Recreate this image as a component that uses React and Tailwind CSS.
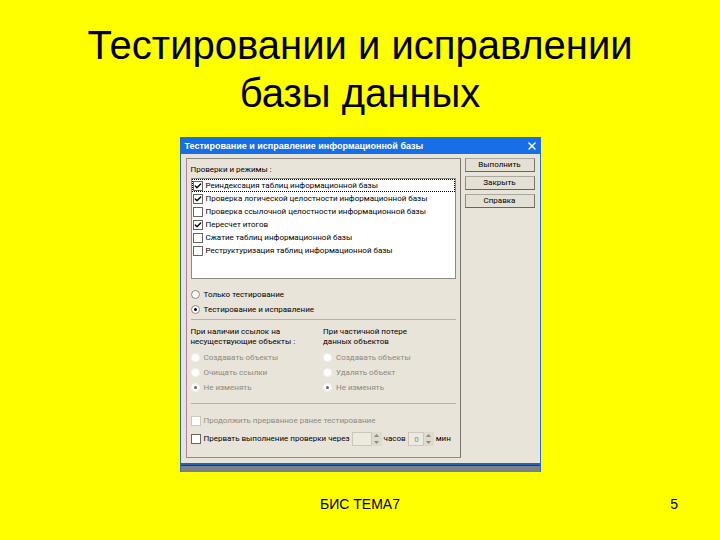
import React from 'react';
import { Check, X } from 'lucide-react';

const checks = [
  { label: 'Реиндексация таблиц информационной базы', checked: true },
  { label: 'Проверка логической целостности информационной базы', checked: true },
  { label: 'Проверка ссылочной целостности информационной базы', checked: false },
  { label: 'Пересчет итогов', checked: true },
  { label: 'Сжатие таблиц информационной базы', checked: false },
  { label: 'Реструктуризация таблиц информационной базы', checked: false },
];

const modes = ['Только тестирование', 'Тестирование и исправление'];

const repairGroups = [
  {
    name: 'missing',
    title: ['При наличии ссылок на', 'несуществующие объекты :'],
    options: ['Создавать объекты', 'Очищать ссылки', 'Не изменять'],
  },
  {
    name: 'partial',
    title: ['При частичной потере', 'данных объектов'],
    options: ['Создавать объекты', 'Удалять объект', 'Не изменять'],
  },
];

const CheckBox = ({ label, checked, disabled, className = '' }) => (
  <label className={`flex items-center gap-[3px] whitespace-nowrap ${disabled ? 'text-[#8d8a80]' : ''} ${className}`}>
    <span className="relative flex shrink-0">
      <input
        type="checkbox"
        defaultChecked={checked}
        disabled={disabled}
        className="peer w-[10px] h-[10px] appearance-none bg-white border border-[#66655f] disabled:border-[#cbc7ba]"
      />
      <Check size={8} strokeWidth={4} className="absolute left-px top-px hidden peer-checked:block pointer-events-none" />
    </span>
    <span>{label}</span>
  </label>
);

const Radio = ({ name, label, checked, disabled }) => (
  <label className={`flex items-center gap-1 h-[15px] whitespace-nowrap ${disabled ? 'text-[#8d8a80]' : ''}`}>
    <span className="relative flex shrink-0">
      <input
        type="radio"
        name={name}
        defaultChecked={checked}
        disabled={disabled}
        className="peer w-[9px] h-[9px] appearance-none rounded-full bg-white border border-[#8d8a80] disabled:border-[#f4f2ea]"
      />
      <span className="absolute left-[3px] top-[3px] w-[3px] h-[3px] rounded-full bg-black hidden peer-checked:block peer-disabled:bg-[#66655f] pointer-events-none" />
    </span>
    <span>{label}</span>
  </label>
);

const Spinner = ({ label, value, className }) => (
  <span className="flex items-center h-[14px]">
    <input
      type="text"
      aria-label={label}
      defaultValue={value}
      className={`h-[14px] px-1 text-right text-[#8d8a80] bg-[#ece9de] border border-[#cbc7ba] ${className}`}
    />
    <span className="flex flex-col w-[10px] h-[14px] bg-[#dedacd]">
      <button type="button" aria-label="Больше" className="flex flex-1 items-center justify-center">
        <svg width="5" height="3" viewBox="0 0 5 3"><path d="M0 3 2.5 0 5 3Z" fill="#8d8a80" /></svg>
      </button>
      <button type="button" aria-label="Меньше" className="flex flex-1 items-center justify-center">
        <svg width="5" height="3" viewBox="0 0 5 3"><path d="M0 0 2.5 3 5 0Z" fill="#8d8a80" /></svg>
      </button>
    </span>
  </span>
);

const Divider = () => <hr className="border-0 border-t border-[#b5b2a7]" />;

const Dialog = () => (
  <section className="w-1/2 min-w-[361px] bg-[#e8e4da] border-x border-t border-[#2b6cc4] font-['Roboto','Liberation_Sans',sans-serif] text-[8px] leading-[10px] text-black">
    <header className="flex items-center justify-between h-[16px] pl-1 pr-[2px] bg-[#176fe8] text-white">
      <h2 className="font-['Liberation_Sans',sans-serif] text-[9px] font-bold whitespace-nowrap">
        Тестирование и исправление информационной базы
      </h2>
      <button type="button" aria-label="Закрыть окно">
        <X size={12} strokeWidth={3} />
      </button>
    </header>

    <div className="flex gap-1 pt-1 pb-[5px] px-[5px]">
      <div className="flex-1 min-w-0 border border-l-[#b57f9c] border-t-[#8d8a80] border-r-[#77756d] border-b-[#a87d9c] px-1 pt-[6px] pb-[11px]">
        <p>Проверки и режимы :</p>

        <div className="mt-[3px] h-[101px] bg-white border border-[#8d8a80]">
          {checks.map((item, i) => (
            <CheckBox
              key={item.label}
              label={item.label}
              checked={item.checked}
              className={`h-[13px] border border-dotted ${i === 0 ? 'border-black' : 'border-transparent'}`}
            />
          ))}
        </div>

        <div className="pt-2 pb-[2px]">
          {modes.map((mode, i) => (
            <Radio key={mode} name="mode" label={mode} checked={i === 1} />
          ))}
        </div>

        <Divider />
        <div className="grid grid-cols-2 pt-[7px] pb-2">
          {repairGroups.map((group) => (
            <div key={group.name}>
              <p className="mb-[3px] whitespace-nowrap">
                {group.title[0]}
                <br />
                {group.title[1]}
              </p>
              {group.options.map((option, i) => (
                <Radio key={option} name={group.name} label={option} checked={i === 2} disabled />
              ))}
            </div>
          ))}
        </div>
        <Divider />

        <div className="flex flex-col gap-1 pt-[10px]">
          <CheckBox label="Продолжить прерванное ранее тестирование" disabled className="h-[14px]" />
          <div className="flex items-center gap-[2px] h-[14px]">
            <CheckBox label="Прервать выполнение проверки через" />
            <Spinner label="Часы" value="" className="w-[20px]" />
            <span>часов</span>
            <Spinner label="Минуты" value="0" className="w-[16px]" />
            <span>мин</span>
          </div>
        </div>
      </div>

      <div className="flex flex-col gap-1 w-[70px]">
        {['Выполнить', 'Закрыть', 'Справка'].map((name) => (
          <button
            key={name}
            type="button"
            className="h-[14px] border border-t-[#aaa79b] border-l-[#8d8a80] border-r-[#77756d] border-b-[#66655f] bg-[#e4e0d4]"
          >
            {name}
          </button>
        ))}
      </div>
    </div>

    <div className="h-[3px] bg-[#2463b8] border-b border-[#173f80]" />
    <div className="h-[6px] bg-[#7c8088]" />
  </section>
);

const App = () => (
  <main className="min-h-screen flex flex-col items-center bg-[#ffff00] font-['Liberation_Sans',sans-serif] text-black">
    <h1 className="pt-[21px] text-[40px] leading-[48px] text-center">
      Тестировании и исправлении
      <br />
      базы данных
    </h1>
    <div className="flex justify-center w-full mt-5">
      <Dialog />
    </div>
    <footer className="grid grid-cols-3 w-full mt-auto px-[42px] pb-[27px] text-[14px] leading-[18px]">
      <span className="col-start-2 text-center">БИС ТЕМА7</span>
      <span className="text-right">5</span>
    </footer>
  </main>
);

export default App;
